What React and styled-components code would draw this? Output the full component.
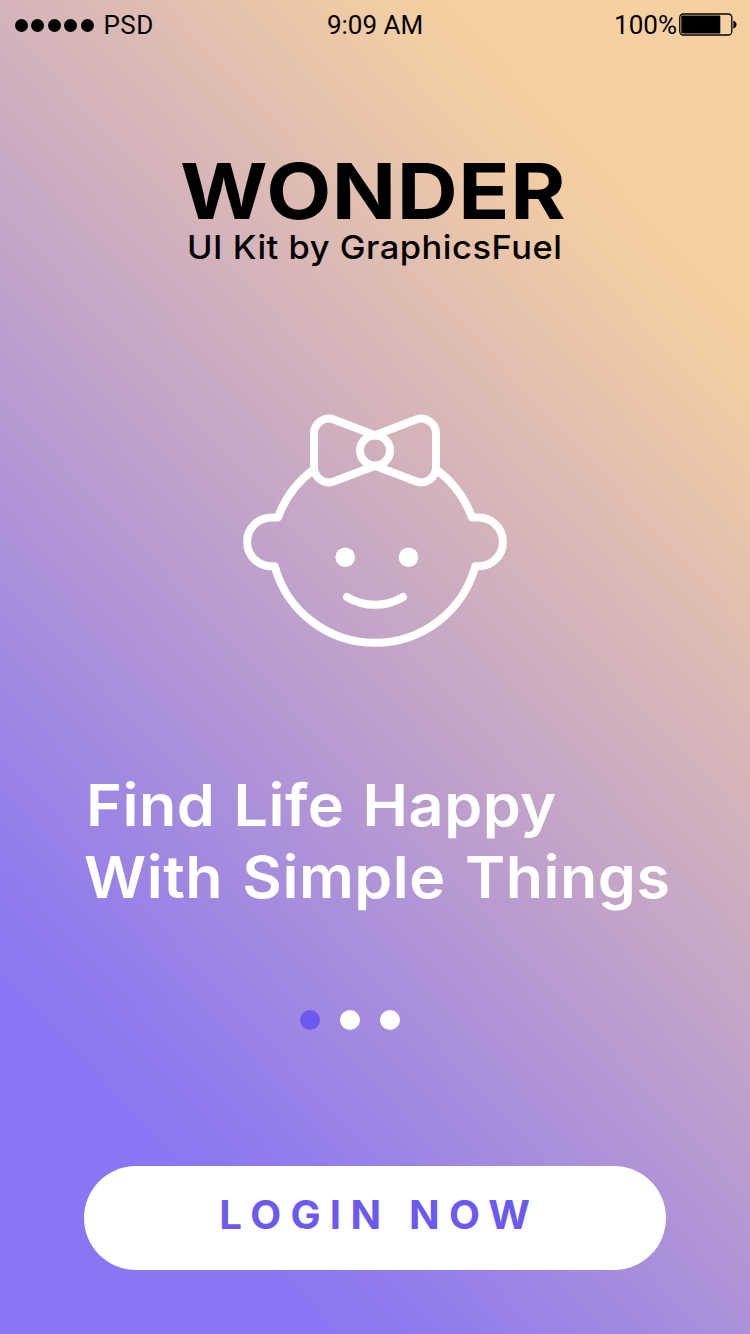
import React from "react";
import styled, { createGlobalStyle } from "styled-components";

const GlobalStyle = createGlobalStyle`
  *, *::before, *::after { box-sizing: border-box; }
  body { margin: 0; }
`;

const Screen = styled.main`
  display: flex;
  flex-direction: column;
  width: 750px;
  height: 1334px;
  overflow: hidden;
  font-family: Inter, "Open Sans", sans-serif;
  background: linear-gradient(
    47deg,
    #8b75f3 16%,
    #8f79ef 20.5%,
    #c2a4c9 51%,
    #f2cca3 81%,
    #f6d0a0 86%
  );
`;

const StatusBar = styled.header`
  display: grid;
  grid-template-columns: 1fr auto 1fr;
  align-items: center;
  height: 50px;
  padding: 0 13px 0 15px;
  font: 400 26px/50px Roboto, sans-serif;
  color: #000;
`;

const Carrier = styled.div`
  display: flex;
  align-items: center;
  gap: 10px;
  letter-spacing: 0.4px;
`;

const Clock = styled.time`
  margin-right: 2px;
`;

const Signal = styled.div`
  display: flex;
  gap: 3.4px;
`;

const SignalDot = styled.i`
  width: 13px;
  height: 13px;
  border-radius: 50%;
  background: #000;
`;

const Power = styled.div`
  display: flex;
  align-items: center;
  justify-content: flex-end;
  gap: 2px;
`;

const Brand = styled.div`
  display: flex;
  flex-direction: column;
  align-items: center;
  margin-top: 101px;
`;

const BrandName = styled.h1`
  margin: 0 3px 0 0;
  font-size: 77.5px;
  font-weight: 700;
  line-height: 80px;
  letter-spacing: 0.5px;
  white-space: nowrap;
  transform: scaleX(1.09);
`;

const Tagline = styled.p`
  margin: 0;
  font-size: 33px;
  font-weight: 500;
  line-height: 32px;
  letter-spacing: 0.5px;
  white-space: nowrap;
  transform: scaleX(1.044);
`;

const Baby = styled.svg`
  display: block;
  flex: none;
  width: 270px;
  height: 240px;
  margin: 147px auto 0;
`;

const Headline = styled.h2`
  margin: 119px 0 0 86px;
  color: #fff;
  font-size: 58px;
  font-weight: 560;
  line-height: 72px;
`;

const HeadlineRow = styled.span`
  display: block;
  margin-left: ${(p) => p.$indent || 0}px;
  letter-spacing: 0.5px;
  word-spacing: ${(p) => p.$gap || 0}px;
  white-space: nowrap;
  transform: scaleX(${(p) => p.$stretch});
  transform-origin: left center;
`;

const Pager = styled.nav`
  display: flex;
  gap: 20px;
  margin: 97px 0 0 300px;
`;

const PageDot = styled.span`
  width: 20px;
  height: 20px;
  border-radius: 50%;
  background: ${(p) => (p.$active ? "#6b59f0" : "#fff")};
`;

const LoginButton = styled.button`
  width: 582px;
  height: 104px;
  margin: 136px 0 0 84px;
  padding: 0 0 8px 8px;
  border: 0;
  border-radius: 52px;
  background: #fff;
  color: #6b59f0;
  font: 700 39px/1 Inter, "Open Sans", sans-serif;
  letter-spacing: 9px;
  white-space: nowrap;
`;

const LoginLabel = styled.span`
  display: inline-block;
  transform: scaleX(1.03);
`;

const BatteryIcon = () => (
  <svg width="58" height="24" viewBox="0 0 58 24">
    <rect x="0.8" y="1" width="52" height="21" rx="3.5" fill="none" stroke="#000" strokeWidth="1.3" />
    <rect x="2.3" y="2.5" width="39" height="18" rx="1" fill="#000" />
    <path d="M54.3 7.800c4.300 1 4.300 6.700 0 7.700z" fill="#000" />
  </svg>
);

const BabyIcon = () => (
  <Baby viewBox="240 410 270 240" fill="none" stroke="#fff" strokeWidth="8" strokeLinejoin="round" strokeLinecap="round">
    <path d="M375 435.300 334.400 419.700A15 15 0 0 0 314 433.700V467.300A15 15 0 0 0 334.400 481.300L375 465.700 415.600 481.300A15 15 0 0 0 436 467.300V433.700A15 15 0 0 0 415.600 419.700Z" />
    <circle cx="375" cy="450.500" r="15" />
    <path d="M313 470A104 104 0 0 0 278 517.500H271.500A24.400 24.400 0 0 0 271.500 566.300H274.700A104 104 0 0 0 475.300 566.300H478.500A24.400 24.400 0 0 0 478.500 517.500H472A104 104 0 0 0 437 470" />
    <path d="M347 597A54 54 0 0 0 403 597" />
    <g fill="#fff" stroke="none">
      <circle cx="345.200" cy="557.300" r="9.800" />
      <circle cx="408.500" cy="557.300" r="9.800" />
    </g>
  </Baby>
);

export default function App() {
  return (
    <>
      <GlobalStyle />
      <Screen>
        <StatusBar>
          <Carrier>
            <Signal>
              {[0, 1, 2, 3, 4].map((n) => (
                <SignalDot key={n} />
              ))}
            </Signal>
            PSD
          </Carrier>
          <Clock>9:09 AM</Clock>
          <Power>
            100%
            <BatteryIcon />
          </Power>
        </StatusBar>
        <Brand>
          <BrandName>WONDER</BrandName>
          <Tagline>UI Kit by GraphicsFuel</Tagline>
        </Brand>
        <BabyIcon />
        <Headline>
          <HeadlineRow $stretch={1.053} $gap={2}>Find Life Happy</HeadlineRow>
          <HeadlineRow $stretch={1.051} $gap={3} $indent={-2}>With Simple Things</HeadlineRow>
        </Headline>
        <Pager>
          <PageDot $active />
          <PageDot />
          <PageDot />
        </Pager>
        <LoginButton>
          <LoginLabel>LOGIN NOW</LoginLabel>
        </LoginButton>
      </Screen>
    </>
  );
}
